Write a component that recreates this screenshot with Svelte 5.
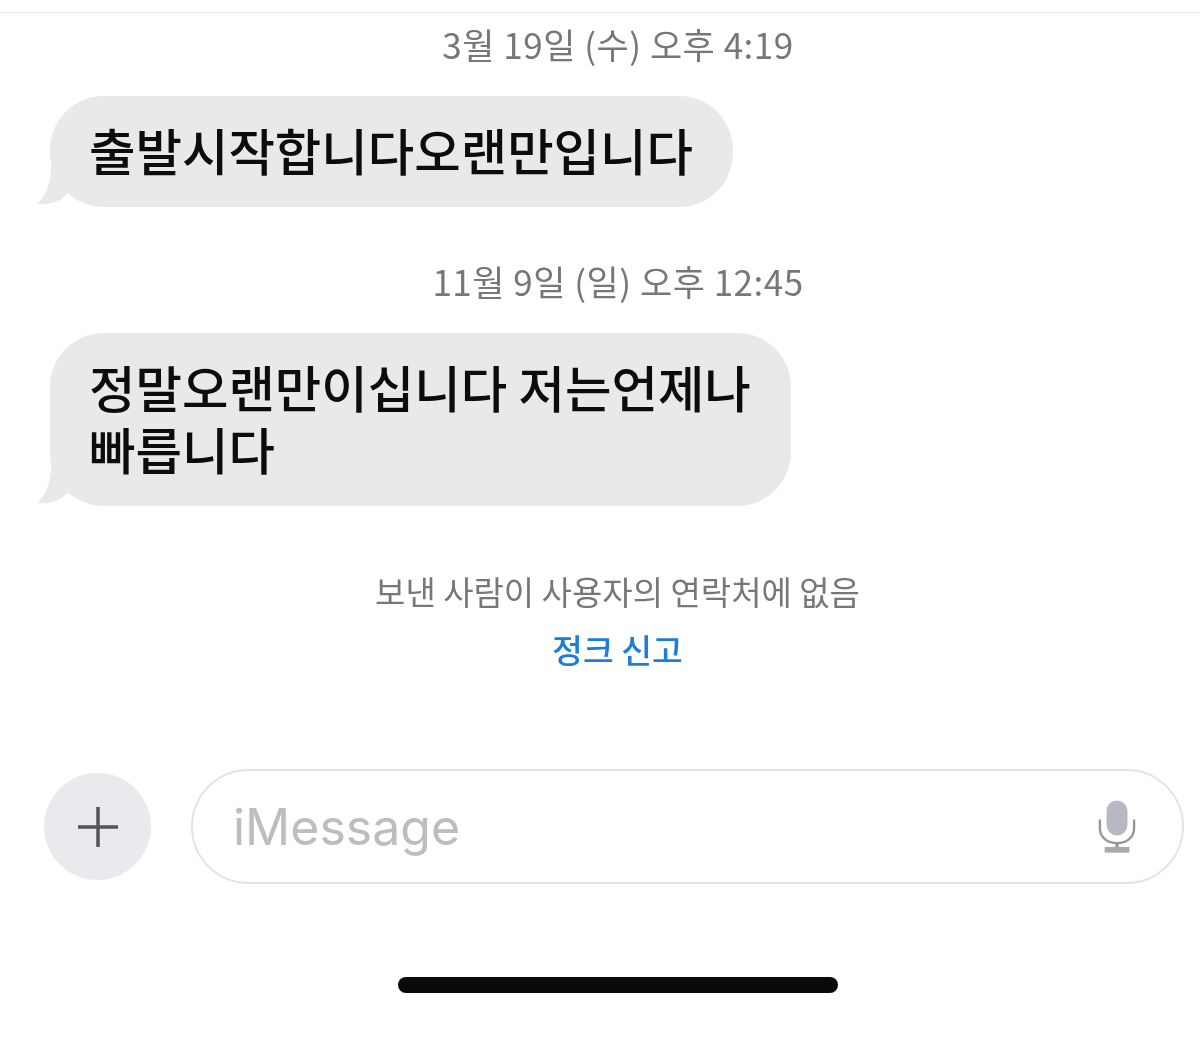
<script lang="ts">
  const threads = [
    { date: '3월 19일 (수) 오후 4:19', lines: ['출발시작합니다오랜만입니다'] },
    { date: '11월 9일 (일) 오후 12:45', lines: ['정말오랜만이십니다 저는언제나', '빠릅니다'] }
  ];
</script>

<div class="screen">
  <div class="messages">
    {#each threads as t}
      <div class="date">{t.date}</div>
      <div class="bubble">
        <svg class="tail" width="40" height="40" viewBox="0 0 40 40" aria-hidden="true">
          <path d="M14 0 C14 14 10 28 0 37 C10 38 20 36 27 30 L40 20 L40 0 Z" fill="#e9e9eb" />
        </svg>
        {#each t.lines as line}
          <div>{line}</div>
        {/each}
      </div>
    {/each}
  </div>

  <div class="notice">
    <div class="notice-text">보낸 사람이 사용자의 연락처에 없음</div>
    <div class="report">정크 신고</div>
  </div>

  <div class="composer">
    <button class="plus" aria-label="추가">
      <svg width="44" height="44" viewBox="0 0 44 44">
        <path d="M22 2V42M2 22H42" stroke="#54565b" stroke-width="3.5" fill="none" />
      </svg>
    </button>
    <div class="input">
      <span class="placeholder">iMessage</span>
      <svg class="mic" width="38" height="54" viewBox="0 0 40 56" aria-hidden="true">
        <rect x="9" y="0" width="22" height="37" rx="11" fill="#b7b9c2" />
        <path d="M2 20V29C2 39 10 45 20 45C30 45 38 39 38 29V20" stroke="#96979c" stroke-width="2.5" fill="none" />
        <path d="M20 45V52" stroke="#96979c" stroke-width="3.5" />
        <rect x="7" y="49" width="26" height="6" fill="#a9aab0" />
      </svg>
    </div>
  </div>

  <div class="home-wrap"><div class="home"></div></div>
</div>

<style>
:global(body) {
  margin: 0;
  background: #fff;
}
.screen {
  width: 1200px;
  height: 1060px;
  box-sizing: border-box;
  padding-top: 12px;
  font-family: "Noto Sans CJK KR", "Liberation Sans", sans-serif;
  background: #fff;
  overflow: hidden;
  filter: blur(0.5px);
}
.messages {
  border-top: 1px solid #e2e2e2;
  padding: 9px 0 0 50px;
  height: 557px;
  box-sizing: border-box;
  display: flex;
  flex-direction: column;
  align-items: flex-start;
}
.date {
  align-self: center;
  margin-left: -14px;
  font-size: 35px;
  letter-spacing: 0.5px;
  line-height: 44px;
  color: #77777b;
  margin-bottom: 30px;
}
.bubble + .date {
  margin-top: 52px;
}
.bubble {
  position: relative;
  background: #e9e9eb;
  color: #0c0c0c;
  font-weight: 500;
  border-radius: 54px;
  padding: 22px 40px 27px 39px;
  font-size: 50.5px;
  line-height: 62px;
  white-space: nowrap;
}
.tail {
  position: absolute;
  left: -13px;
  bottom: 0;
}
.bubble div {
  position: relative;
}
.notice {
  text-align: center;
  margin-left: -1px;
  padding-left: 36px;
}
.notice-text {
  font-size: 33px;
  line-height: 44px;
  color: #77777b;
}
.report {
  font-size: 33.5px;
  line-height: 44px;
  margin-top: 14px;
  font-weight: 500;
  color: #1c7ed6;
}
.composer {
  display: flex;
  align-items: center;
  gap: 40px;
  padding: 0 16px 0 44px;
  margin-top: 98px;
}
.plus {
  width: 107px;
  height: 107px;
  flex: none;
  border: none;
  padding: 0;
  border-radius: 50%;
  background: #e9eaed;
  display: flex;
  align-items: center;
  justify-content: center;
}
.input {
  flex: 1;
  height: 115px;
  box-sizing: border-box;
  border: 2px solid #e4e4e6;
  border-radius: 58px;
  display: flex;
  align-items: center;
  justify-content: space-between;
  padding: 0 46px 0 40px;
}
.placeholder {
  font-family: "Inter", "Liberation Sans", sans-serif;
  font-size: 50px;
  color: #bdbdc0;
}
.home-wrap {
  display: flex;
  justify-content: center;
  padding-left: 36px;
  margin-top: 93px;
}
.home {
  width: 440px;
  height: 16px;
  border-radius: 8px;
  background: #0a0a0a;
}
</style>
